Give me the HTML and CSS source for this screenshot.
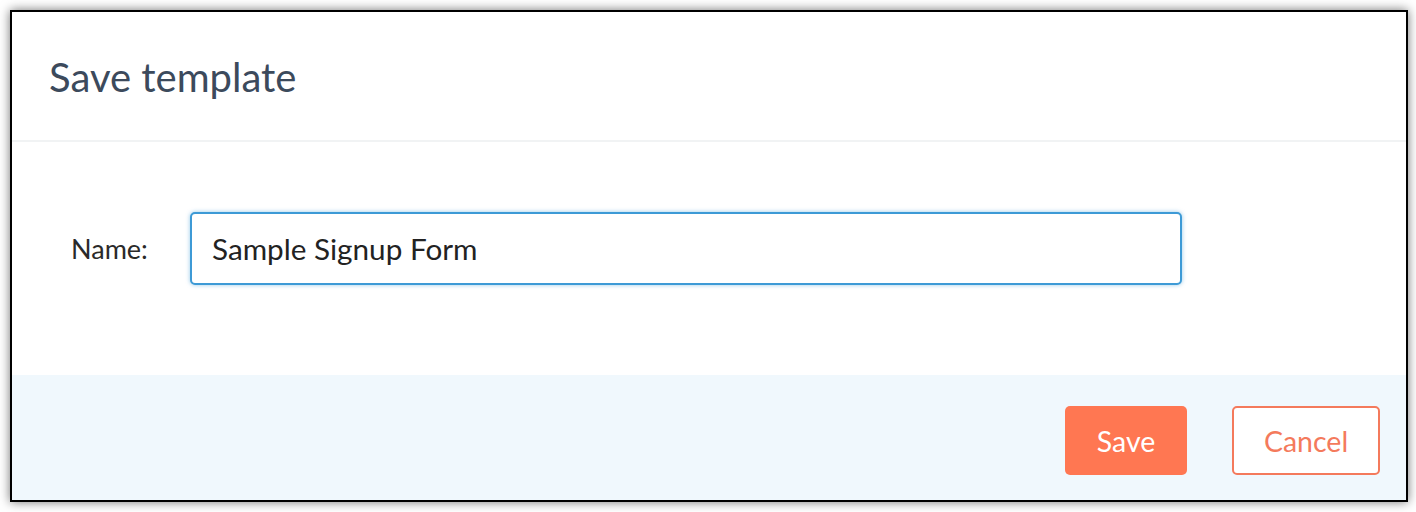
FILE: index.html
```html
<!DOCTYPE html>
<html>
<head>
<meta charset="utf-8">
<link rel="stylesheet" href="styles.css">
</head>
<body>
<div class="dialog">
  <div class="header">
    <h1 class="title">Save template</h1>
  </div>
  <div class="body">
    <label class="label" for="name">Name:</label>
    <input class="input" id="name" type="text" value="Sample Signup Form">
  </div>
  <div class="footer">
    <button class="btn btn-primary">Save</button>
    <button class="btn btn-secondary">Cancel</button>
  </div>
</div>
</body>
</html>
```

FILE: styles.css
```css
html, body {
  margin: 0;
  padding: 0;
  background: #ffffff;
}
body {
  padding: 10px 8px 10px 10px;
  font-family: Lato, "Open Sans", sans-serif;
}
.dialog {
  width: 1394px;
  height: 488px;
  border: 2px solid #000;
  background: #fff;
  box-shadow: 0 0 10px rgba(0, 0, 0, 0.55);
  display: flex;
  flex-direction: column;
}
.header {
  height: 130px;
  border-bottom: 2px solid #f1f3f4;
  display: flex;
  align-items: center;
  padding: 0 38px 0 37px;
  box-sizing: border-box;
}
.title {
  margin: 0;
  font-weight: 400;
  font-size: 40px;
  color: #3c4a5c;
  position: relative;
  top: 1px;
}
.body {
  flex: 1;
  display: flex;
  align-items: center;
  padding: 0 58px;
  gap: 40px;
  position: relative;
  top: -10px;
}
.label {
  font-size: 27px;
  color: #2a2a2a;
  width: 80px;
  text-indent: 1px;
}
.input {
  width: 992px;
  height: 73px;
  box-sizing: border-box;
  border: 2px solid #3d9ad6;
  border-radius: 5px;
  box-shadow: 0 0 4px rgba(61, 154, 214, 0.55);
  padding: 0 20px;
  font-family: Lato, "Open Sans", sans-serif;
  font-size: 29.7px;
  color: #222;
  outline: none;
}
.footer {
  height: 125px;
  background: #f0f8fd;
  display: flex;
  justify-content: flex-end;
  align-items: center;
  padding: 6px 26px 0;
  gap: 45px;
  box-sizing: border-box;
}
.btn {
  height: 69px;
  border-radius: 5px;
  font-family: Lato, "Open Sans", sans-serif;
  font-size: 28.5px;
  cursor: pointer;
  box-sizing: border-box;
}
.btn-primary {
  width: 122px;
  background: #ff7752;
  border: none;
  color: #fff;
}
.btn-secondary {
  width: 148px;
  background: #fff;
  border: 2px solid #f47a5c;
  color: #f47a5c;
}
```
